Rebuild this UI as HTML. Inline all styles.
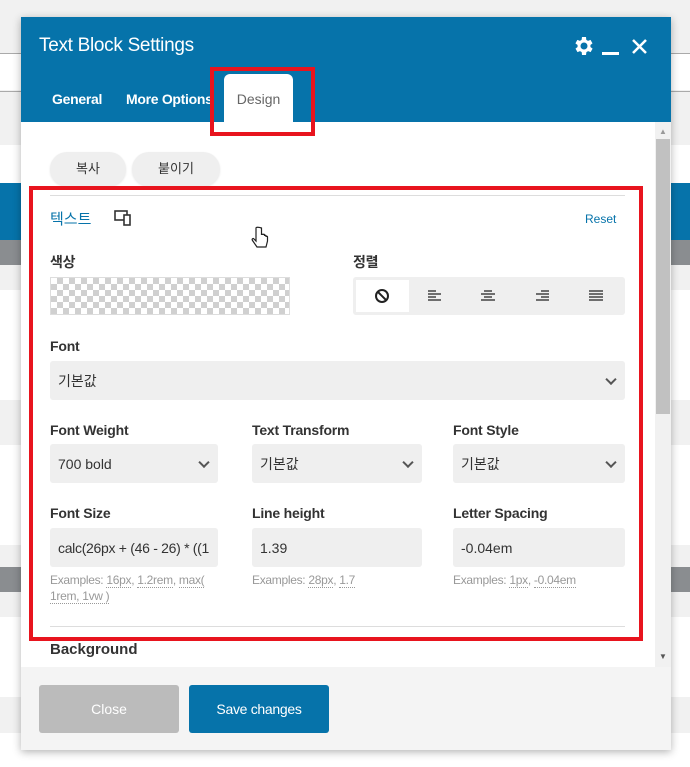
<!DOCTYPE html>
<html><head><meta charset="utf-8"><style>
*{box-sizing:border-box;margin:0;padding:0}
body{width:690px;height:767px;position:relative;overflow:hidden;background:#f1f1f1;font-family:"Liberation Sans","Noto Sans CJK KR",sans-serif;color:#333}
.band{position:absolute;left:0;width:690px}
.dlg{position:absolute;left:21px;top:17px;width:650px;height:733px;background:#fff;box-shadow:0 2px 8px rgba(0,0,0,.3)}
.hdr{position:absolute;left:0;top:0;width:650px;height:105px;background:#0673aa}
.title{position:absolute;left:18px;top:18px;color:#fff;font-size:19px;letter-spacing:-0.3px}
.tab{position:absolute;top:74px;color:#fff;font-size:14px;font-weight:bold;letter-spacing:-0.3px}
.abs{position:absolute}
.lbl{position:absolute;font-size:14px;font-weight:bold;color:#333;letter-spacing:-0.2px}
.sel{position:absolute;background:#efefef;border-radius:3px;font-size:14px;color:#333;padding-left:8px;display:flex;align-items:center}
.sel .ch{position:absolute;right:10px;top:50%;width:8px;height:8px;border-right:2px solid #555;border-bottom:2px solid #555;transform:translateY(-70%) rotate(45deg)}
.ex{position:absolute;font-size:12px;color:#999;line-height:16px;letter-spacing:-0.3px}
.ex u{text-decoration:none;border-bottom:1px dotted #999}
.red{position:absolute;border:4px solid #e8141e}
</style></head><body>
<div class="band" style="top:53px;height:1px;background:#aaa"></div>
<div class="band" style="top:54px;height:36px;background:#fff"></div>
<div class="band" style="top:91px;height:1px;background:#aaa"></div>
<div class="band" style="top:92px;height:53px;background:#f1f1f1"></div>
<div class="band" style="top:145px;height:38px;background:#fff"></div>
<div class="band" style="top:183px;height:57px;background:#0673aa"></div>
<div class="band" style="top:240px;height:25px;background:#8a8d90"></div>
<div class="band" style="top:290px;height:110px;background:#fff"></div>
<div class="band" style="top:445px;height:100px;background:#fff"></div>
<div class="band" style="top:567px;height:25px;background:#8a8d90"></div>
<div class="band" style="top:617px;height:80px;background:#fff"></div>
<div class="band" style="top:733px;height:34px;background:#fff"></div>

<div class="dlg">
 <div class="hdr">
  <div class="title">Text Block Settings</div>
  <svg class="abs" style="left:550px;top:17px" width="24" height="24" viewBox="0 0 24 24"><path fill="#fff" d="M19.4 13a7.5 7.5 0 000-2l2.1-1.6-2-3.5-2.5 1a7 7 0 00-1.7-1L15 3h-4l-.4 2.9a7 7 0 00-1.7 1l-2.5-1-2 3.5L6.6 11a7.5 7.5 0 000 2l-2.1 1.6 2 3.5 2.5-1a7 7 0 001.7 1L11 21h4l.4-2.9a7 7 0 001.7-1l2.5 1 2-3.5zM13 15.5a3.5 3.5 0 110-7 3.5 3.5 0 010 7z"/></svg>
  <div class="abs" style="left:581px;top:35px;width:17px;height:3px;background:#fff"></div>
  <svg class="abs" style="left:610px;top:21px" width="17" height="17" viewBox="0 0 17 17"><path d="M2 2L15 15M15 2L2 15" stroke="#fff" stroke-width="2.5"/></svg>
  <div class="tab" style="left:31px">General</div>
  <div class="tab" style="left:105px">More Options</div>
  <div class="abs" style="left:203px;top:57px;width:69px;height:48px;background:#fff;border-radius:6px 6px 0 0;color:#666;font-size:14px;padding-top:17px;text-align:center">Design</div>
 </div>
 <div class="abs" style="left:634px;top:105px;width:16px;height:545px;background:#f1f1f1"></div>
 <div class="abs" style="left:635px;top:122px;width:14px;height:275px;background:#c1c1c1"></div>
 <div class="abs" style="left:638px;top:110px;font-size:8px;color:#999">▲</div>
 <div class="abs" style="left:638px;top:635px;font-size:8px;color:#555">▼</div>
 <div class="abs" style="left:0;top:650px;width:650px;height:83px;background:#f4f4f4"></div>
 <div class="abs" style="left:18px;top:668px;width:140px;height:48px;background:#bbb;border-radius:3px;color:#fff;font-size:14px;text-align:center;line-height:48px">Close</div>
 <div class="abs" style="left:168px;top:668px;width:140px;height:48px;background:#0673aa;border-radius:3px;color:#fff;font-size:14px;text-align:center;line-height:48px;letter-spacing:-0.3px">Save changes</div>
</div>
<div class="abs" style="left:50px;top:152px;width:76px;height:34px;background:#efefef;border-radius:17px;font-size:13px;text-align:center;line-height:34px;box-shadow:0 1px 2px rgba(0,0,0,.1)">복사</div>
<div class="abs" style="left:132px;top:152px;width:88px;height:34px;background:#efefef;border-radius:17px;font-size:13px;text-align:center;line-height:34px;box-shadow:0 1px 2px rgba(0,0,0,.1)">붙이기</div>
<div class="abs" style="left:50px;top:195px;width:575px;height:1px;background:#ddd"></div>
<div class="abs" style="left:50px;top:208px;font-size:15px;color:#0673aa">텍스트</div>
<svg class="abs" style="left:114px;top:210px" width="18" height="16" viewBox="0 0 18 16"><rect x="1" y="1" width="12" height="9" fill="none" stroke="#333" stroke-width="1.6"/><rect x="10" y="5" width="6" height="10" fill="#fff" stroke="#333" stroke-width="1.6"/></svg>
<div class="abs" style="left:585px;top:212px;font-size:12px;color:#0673aa">Reset</div>
<div class="lbl" style="left:50px;top:252px">색상</div>
<div class="abs" style="left:50px;top:277px;width:240px;height:38px;border:1px solid #ddd;background-color:#fff;background-image:linear-gradient(45deg,#d0d0d0 25%,transparent 25%,transparent 75%,#d0d0d0 75%),linear-gradient(45deg,#d0d0d0 25%,transparent 25%,transparent 75%,#d0d0d0 75%);background-size:12px 12px;background-position:0 0,6px 6px"></div>
<div class="lbl" style="left:353px;top:252px">정렬</div>
<div class="abs" style="left:353px;top:277px;width:272px;height:38px;background:#efefef;border-radius:3px"></div>
<div class="abs" style="left:356px;top:280px;width:53px;height:32px;background:#fff"></div>
<svg class="abs" style="left:374px;top:288px" width="16" height="16" viewBox="0 0 16 16"><circle cx="8" cy="8" r="6" fill="none" stroke="#222" stroke-width="2"/><path d="M4 4L12 12" stroke="#222" stroke-width="2"/></svg>
<svg class="abs" style="left:428px;top:290px" width="14" height="12"><path d="M0 1h8M0 4h13M0 7h8M0 10h13" stroke="#444" stroke-width="1.5"/></svg>
<svg class="abs" style="left:481px;top:290px" width="14" height="12"><path d="M3 1h8M0 4h14M3 7h8M0 10h14" stroke="#444" stroke-width="1.5"/></svg>
<svg class="abs" style="left:535px;top:290px" width="14" height="12"><path d="M6 1h8M1 4h13M6 7h8M1 10h13" stroke="#444" stroke-width="1.5"/></svg>
<svg class="abs" style="left:589px;top:290px" width="14" height="12"><path d="M0 1h14M0 4h14M0 7h14M0 10h14" stroke="#444" stroke-width="1.5"/></svg>
<div class="lbl" style="left:50px;top:338px">Font</div>
<div class="sel" style="left:50px;top:361px;width:575px;height:39px">기본값<span class="ch"></span></div>
<div class="lbl" style="left:50px;top:422px">Font Weight</div>
<div class="lbl" style="left:252px;top:422px">Text Transform</div>
<div class="lbl" style="left:453px;top:422px">Font Style</div>
<div class="sel" style="left:50px;top:444px;width:168px;height:39px">700 bold<span class="ch"></span></div>
<div class="sel" style="left:252px;top:444px;width:170px;height:39px">기본값<span class="ch"></span></div>
<div class="sel" style="left:453px;top:444px;width:172px;height:39px">기본값<span class="ch"></span></div>
<div class="lbl" style="left:50px;top:505px">Font Size</div>
<div class="lbl" style="left:252px;top:505px">Line height</div>
<div class="lbl" style="left:453px;top:505px">Letter Spacing</div>
<div class="sel" style="left:50px;top:528px;width:168px;height:39px;overflow:hidden;white-space:nowrap;letter-spacing:-0.3px">calc(26px + (46 - 26) * ((1</div>
<div class="sel" style="left:252px;top:528px;width:170px;height:39px">1.39</div>
<div class="sel" style="left:453px;top:528px;width:172px;height:39px">-0.04em</div>
<div class="ex" style="left:50px;top:572px;width:170px">Examples: <u>16px</u>, <u>1.2rem</u>, <u>max(</u><br><u>1rem, 1vw )</u></div>
<div class="ex" style="left:252px;top:572px">Examples: <u>28px</u>, <u>1.7</u></div>
<div class="ex" style="left:453px;top:572px">Examples: <u>1px</u>, <u>-0.04em</u></div>
<div class="abs" style="left:50px;top:626px;width:575px;height:1px;background:#ddd"></div>
<div class="abs" style="left:50px;top:641px;font-size:15px;font-weight:bold;color:#333">Background</div>
<div class="red" style="left:210px;top:67px;width:105px;height:69px"></div>
<div class="red" style="left:29px;top:186px;width:614px;height:455px"></div>
<svg class="abs" style="left:251px;top:226px" width="18" height="24" viewBox="0 0 18 24"><path d="M5 2v13l-2-2c-1-1-2.5 0-1.5 1.5L6 21h9l1.5-6v-4c0-1-1.5-1-1.5 0v-1c0-1-1.5-1-1.5 0v-1c0-1-1.5-1-1.5 0V9c0-1-1.5-1-1.5 0V2C7.5 1 5 1 5 2z" fill="#fff" stroke="#222" stroke-width="1.2"/></svg>
</body></html>
